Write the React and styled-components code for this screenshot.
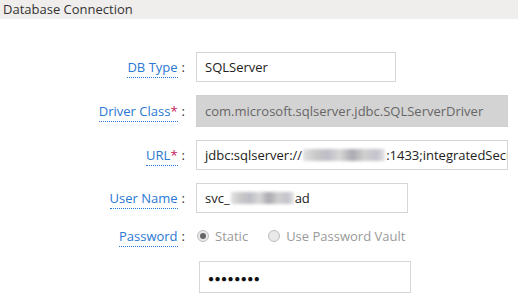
import React from "react";
import styled, { createGlobalStyle } from "styled-components";

const GlobalStyle = createGlobalStyle`
  html, body {
    margin: 0;
    padding: 0;
    background: #ffffff;
    font-family: "Open Sans", "Liberation Sans", sans-serif;
  }
`;

const Panel = styled.div`
  width: 518px;
  height: 300px;
  overflow: hidden;
  background: #ffffff;
`;

const Header = styled.div`
  height: 19px;
  line-height: 19px;
  padding-left: 3px;
  background: #efeeec;
  color: #333333;
  font-size: 13px;
`;

const Form = styled.div`
  display: grid;
  grid-template-columns: 185px 1fr;
  column-gap: 11px;
  row-gap: 13px;
  padding-top: 33px;
  align-items: center;
`;

const Label = styled.div`
  text-align: right;
  font-size: 13px;
  color: #333333;
  white-space: nowrap;
`;

const LabelText = styled.span`
  color: #2a78d3;
  border-bottom: 1px dotted #2a78d3;
  padding-bottom: 1px;
`;

const Required = styled.span`
  color: #c2185b;
`;

const Colon = styled.span`
  margin-left: 4px;
`;

const Field = styled.div`
  box-sizing: border-box;
  height: ${(p) => p.$h || 30}px;
  line-height: ${(p) => (p.$h || 30) - 2}px;
  width: ${(p) => p.$w}px;
  margin-left: ${(p) => p.$offset || 0}px;
  padding: 0 8px;
  overflow: hidden;
  white-space: nowrap;
  font-size: 13px;
  color: ${(p) => (p.$disabled ? "#666666" : "#222222")};
  background: ${(p) => (p.$disabled ? "#d3d3d3" : "#ffffff")};
  border: 1px solid ${(p) => (p.$disabled ? "#d0d0d0" : "#d6d6d6")};
`;

const Blur = styled.span`
  display: inline-block;
  vertical-align: -1px;
  width: ${(p) => p.$w}px;
  height: 12px;
  margin: 0 1px;
  background: linear-gradient(
    90deg,
    #e2e2e2 0%,
    #c9c9c9 15%,
    #bdbdc6 30%,
    #d8d8d8 45%,
    #a9a9b0 60%,
    #d0d0d0 75%,
    #c2c2cc 90%,
    #e6e6e6 100%
  );
  filter: blur(1.5px);
`;

const Dots = styled.span`
  letter-spacing: 0.5px;
  font-size: 10px;
  color: #111111;
`;

const RadioRow = styled.div`
  display: flex;
  align-items: center;
  height: 20px;
  font-size: 13px;
  color: #9a9a9a;
`;

const RadioOption = styled.label`
  display: flex;
  align-items: center;
  margin-right: 19px;
`;

const RadioCircle = styled.span`
  box-sizing: border-box;
  width: 12px;
  height: 12px;
  margin-left: 1px;
  margin-right: 6px;
  border-radius: 50%;
  border: 1px solid #bdbdbd;
  background: #e9e9e9;
  display: flex;
  align-items: center;
  justify-content: center;

  &::after {
    content: "";
    width: 6px;
    height: 6px;
    border-radius: 50%;
    background: ${(p) => (p.$checked ? "#666666" : "transparent")};
  }
`;

const Spacer = styled.div``;

const PasswordRow = styled.div`
  margin-top: 2px;
`;

export default function App() {
  return (
    <Panel>
      <GlobalStyle />
      <Header>Database Connection</Header>
      <Form>
        <Label>
          <LabelText>DB Type</LabelText>
          <Colon>:</Colon>
        </Label>
        <Field $w={200}>SQLServer</Field>

        <Label>
          <LabelText>
            Driver Class<Required>*</Required>
          </LabelText>
          <Colon>:</Colon>
        </Label>
        <Field $w={312} $h={32} $disabled>
          com.microsoft.sqlserver.jdbc.SQLServerDriver
        </Field>

        <Label>
          <LabelText>
            URL<Required>*</Required>
          </LabelText>
          <Colon>:</Colon>
        </Label>
        <Field $w={312}>
          jdbc:sqlserver://<Blur $w={82} />:1433;integratedSecurity=true
        </Field>

        <Label>
          <LabelText>User Name</LabelText>
          <Colon>:</Colon>
        </Label>
        <Field $w={212}>
          svc_<Blur $w={63} />ad
        </Field>

        <Label>
          <LabelText>Password</LabelText>
          <Colon>:</Colon>
        </Label>
        <RadioRow>
          <RadioOption>
            <RadioCircle $checked />
            Static
          </RadioOption>
          <RadioOption>
            <RadioCircle />
            Use Password Vault
          </RadioOption>
        </RadioRow>

        <Spacer />
        <PasswordRow>
          <Field $w={212} $h={32} $offset={3}>
            <Dots>●●●●●●●●</Dots>
          </Field>
        </PasswordRow>
      </Form>
    </Panel>
  );
}
